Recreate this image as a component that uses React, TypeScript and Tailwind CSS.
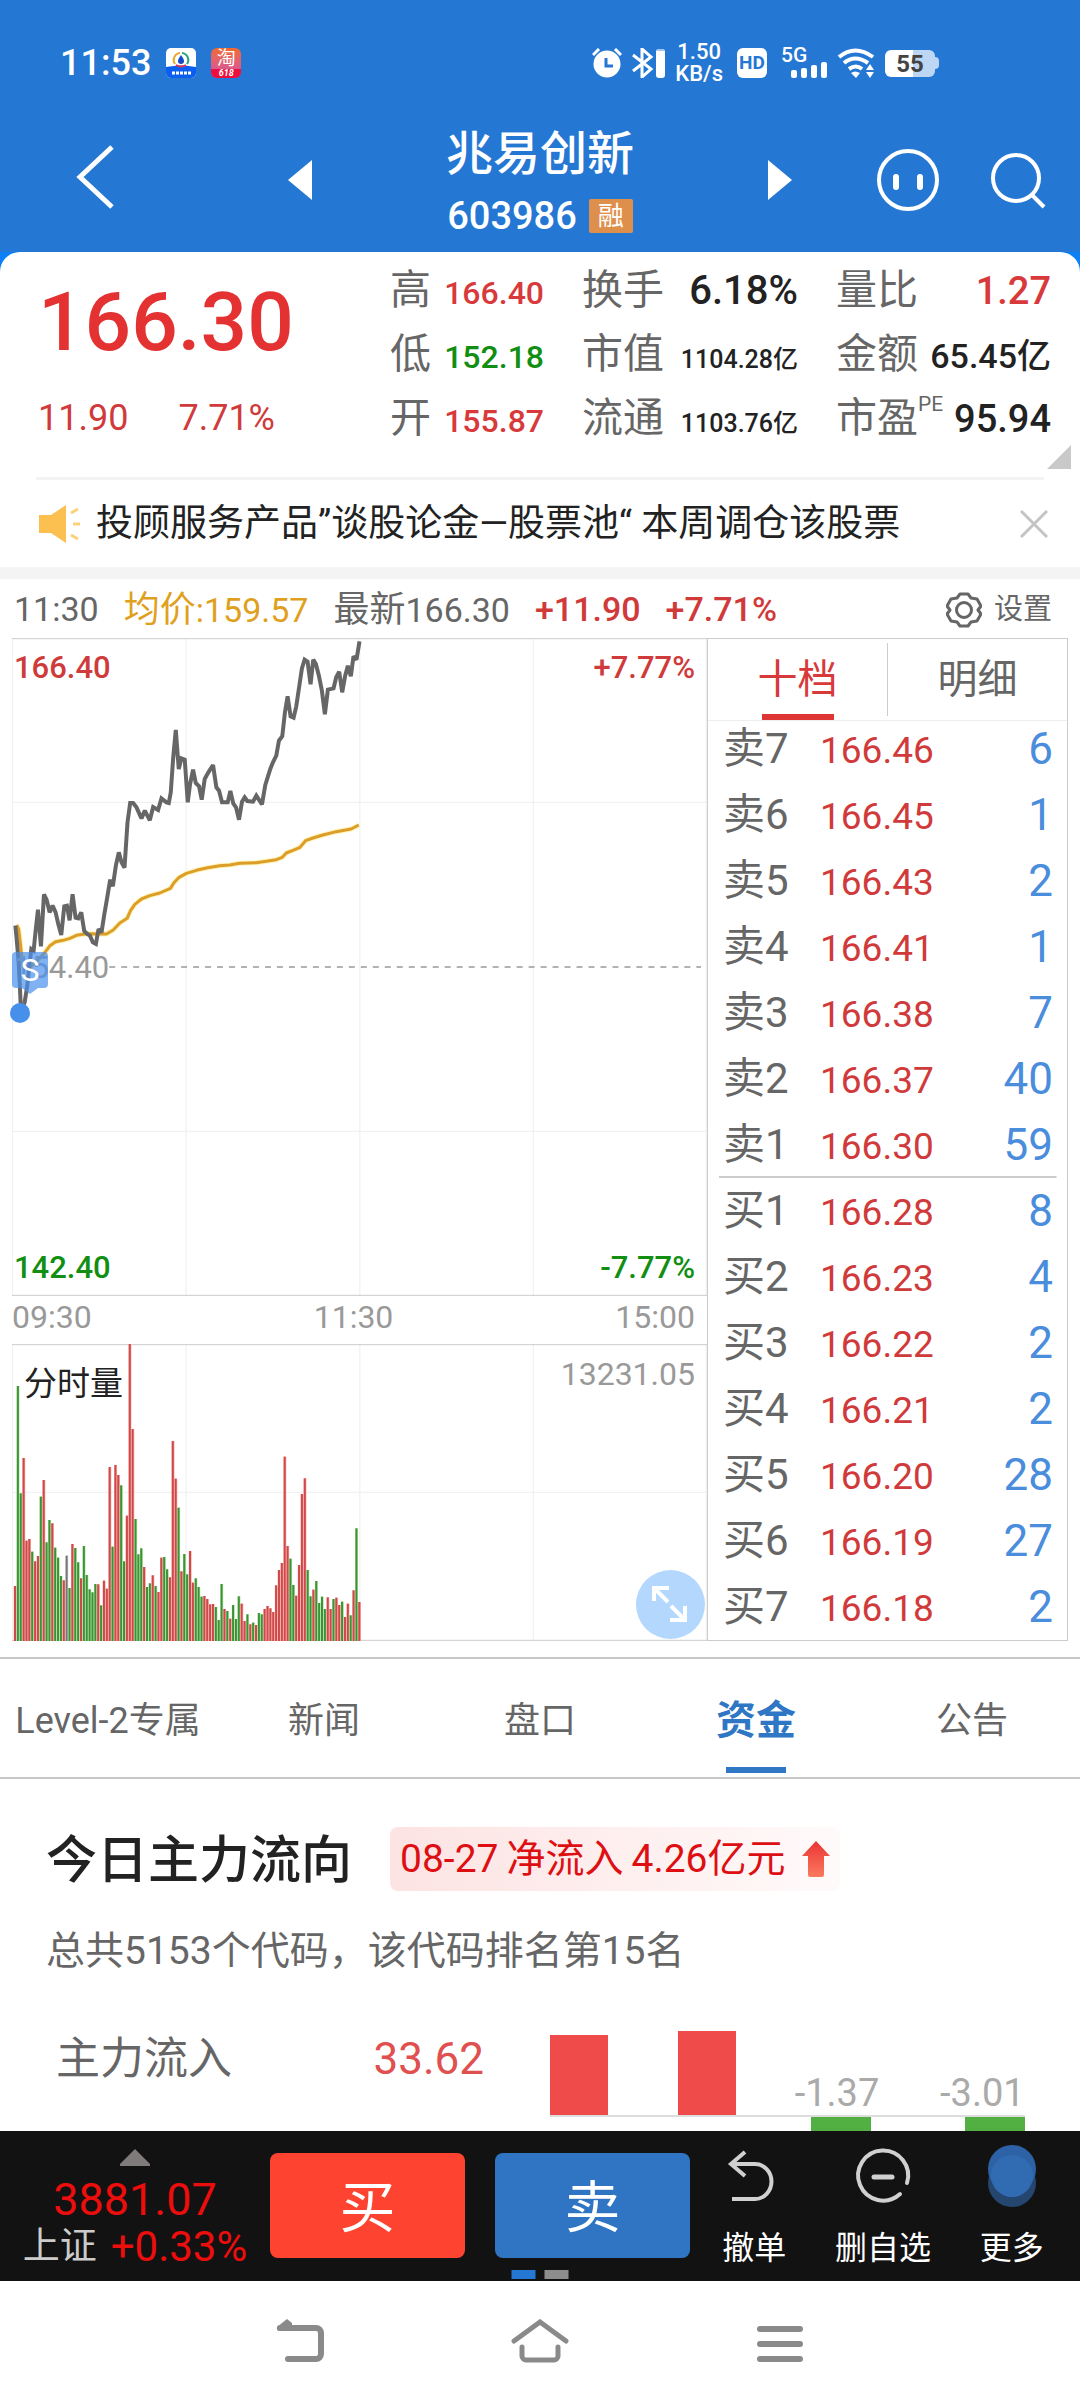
import type { ReactNode } from 'react'
import clsx from 'clsx'

type Tone = 'red' | 'green' | 'dark'

const TONES: Record<Tone, string> = {
  red: 'text-[#d8393a]',
  green: 'text-[#128f12]',
  dark: 'text-[#222222]',
}

const STATS: { label: string; value: string; tone: Tone; size: string; sup?: string }[][] = [
  [
    { label: '高', value: '166.40', tone: 'red', size: 'text-[32px]' },
    { label: '低', value: '152.18', tone: 'green', size: 'text-[32px]' },
    { label: '开', value: '155.87', tone: 'red', size: 'text-[32px]' },
  ],
  [
    { label: '换手', value: '6.18%', tone: 'dark', size: 'text-[40px]' },
    { label: '市值', value: '1104.28亿', tone: 'dark', size: 'text-[25px]' },
    { label: '流通', value: '1103.76亿', tone: 'dark', size: 'text-[25px]' },
  ],
  [
    { label: '量比', value: '1.27', tone: 'red', size: 'text-[38px]' },
    { label: '金额', value: '65.45亿', tone: 'dark', size: 'text-[34px]' },
    { label: '市盈', value: '95.94', tone: 'dark', size: 'text-[38px]', sup: 'PE' },
  ],
]

const STAT_WIDTHS = ['w-[154px]', 'w-[216px]', 'w-[215px]']

const BOOK = [
  ['卖7', '166.46', '6'],
  ['卖6', '166.45', '1'],
  ['卖5', '166.43', '2'],
  ['卖4', '166.41', '1'],
  ['卖3', '166.38', '7'],
  ['卖2', '166.37', '40'],
  ['卖1', '166.30', '59'],
  ['买1', '166.28', '8'],
  ['买2', '166.23', '4'],
  ['买3', '166.22', '2'],
  ['买4', '166.21', '2'],
  ['买5', '166.20', '28'],
  ['买6', '166.19', '27'],
  ['买7', '166.18', '2'],
]

const TABS = ['Level-2专属', '新闻', '盘口', '资金', '公告']

const PRICE_LINE =
  '46,890 50,930 56,1000 60,1080 63,1150 74,1120 82,1070 88,1010 94,960 101,965 107,905 114,842 123,952 132,796 140,812 149,850 158,830 167,850 175,885 184,918 193,832 201,830 209,874 218,796 227,866 235,868 244,850 253,906 262,915 270,920 279,940 288,945 296,900 305,910 313,858 322,806 331,752 339,772 348,710 357,670 365,700 374,716 383,580 391,522 400,522 410,535 425,568 435,545 450,574 460,534 475,543 485,508 500,520 507,522 513,490 520,390 528,303 537,420 545,388 555,392 564,520 571,465 580,422 588,462 598,472 606,512 615,450 626,430 640,408 650,475 658,485 667,520 684,520 692,486 701,524 709,535 718,572 727,518 735,505 743,516 760,518 770,500 787,526 797,468 812,420 820,400 830,380 838,335 848,322 856,250 864,202 873,262 882,266 890,232 900,165 907,118 915,92 924,98 933,166 941,92 949,105 958,140 967,185 976,256 985,182 1002,178 1010,145 1019,128 1028,190 1037,140 1045,110 1054,142 1062,82 1071,92 1080,37'

const AVERAGE_LINE =
  '50,888 56,900 62,950 68,1010 90,1015 110,998 122,985 135,970 150,950 167,938 190,934 210,928 230,919 260,914 320,915 340,903 360,882 382,868 392,845 405,826 425,810 450,800 480,792 512,778 522,762 538,745 560,733 590,724 620,717 660,710 690,708 720,703 770,701 800,697 830,692 848,685 860,672 880,664 900,656 918,635 940,627 970,618 1010,608 1055,600 1078,588'

// Distance of each bar's top from the upper edge, one bar per minute.
const VOLUME_TOPS = [
  726, 126, 448, 342, 590, 585, 623, 652, 636, 458, 408, 595, 528, 538, 611, 641, 696, 709, 635, 732,
  600, 612, 655, 703, 606, 693, 736, 745, 720, 721, 784, 710, 734, 369, 608, 363, 393, 424, 652, 515,
  0, 255, 525, 631, 613, 669, 729, 718, 694, 726, 744, 641, 639, 676, 700, 291, 404, 491, 682, 630,
  691, 621, 716, 703, 729, 758, 756, 765, 781, 780, 789, 828, 720, 795, 801, 824, 783, 825, 757, 779,
  831, 811, 841, 836, 843, 807, 811, 795, 786, 793, 804, 724, 678, 657, 338, 606, 644, 723, 755, 663,
  450, 403, 678, 757, 737, 711, 777, 758, 795, 760, 795, 765, 761, 783, 773, 819, 779, 814, 739, 553,
  774,
]

const VOLUME_SIDES =
  'rggrrrgrrgrggrgggrngrggrggggg' +
  'rgrrrgrrggrrrgggrggrgrrggrrrgrggrrggg' +
  'rrrrgggrgrgggrrgrgrggrrrrrrrrrggrrrrggrgggg' +
  'rrgrrgrrgrgr'

const BAR_COLORS: Record<string, string> = { r: '#cc4a4a', g: '#3f9137', n: '#777777' }
const HALO_COLORS: Record<string, string> = { r: '#ffb4b0', g: '#b4e8a8', n: '#dddddd' }

function GridLines({ height }: { height: number }) {
  return (
    <g stroke="#eeeeee" strokeWidth="3">
      {[1, 523, 1045, 1566, 2086].map((x) => (
        <line key={x} x1={x} x2={x} y1="0" y2={height} />
      ))}
    </g>
  )
}

function PricePanel() {
  return (
    <div className="relative h-[658px] text-[31px] leading-10 font-medium">
      <svg className="h-full w-full" viewBox="0 0 2088 1974" preserveAspectRatio="none">
        <GridLines height={1974} />
        <g stroke="#eeeeee" strokeWidth="3">
          <line x1="0" x2="2088" y1="493" y2="493" />
          <line x1="0" x2="2088" y1="1480" y2="1480" />
        </g>
        <line x1="292" x2="2070" y1="987" y2="987" stroke="#999999" strokeWidth="5" strokeDasharray="18 18" />
        <g transform="translate(-36 -27)" fill="none" strokeLinejoin="round">
          <polyline points={AVERAGE_LINE} stroke="#fff3b8" strokeWidth="15" />
          <polyline points={AVERAGE_LINE} stroke="#dc9e28" strokeWidth="9" />
          <polyline points={PRICE_LINE} stroke="#666666" strokeWidth="12" strokeLinejoin="miter" strokeMiterlimit="2" />
        </g>
        <g stroke="#cccccc" strokeWidth="3">
          <line x1="0" x2="2088" y1="2" y2="2" />
          <line x1="0" x2="2088" y1="1972" y2="1972" />
        </g>
      </svg>
      <span className="absolute top-2.5 left-0.5 text-[#cf3b3b]">166.40</span>
      <span className="absolute top-2.5 right-3 text-[#cf3b3b]">+7.77%</span>
      <span className="absolute top-[310px] left-0.5 font-normal text-[#999999]">154.40</span>
      <span className="absolute bottom-2 left-0.5 text-[#128f12]">142.40</span>
      <span className="absolute right-3 bottom-2 text-[#128f12]">-7.77%</span>
      {/* sell marker */}
      <div className="absolute top-[314px] left-0 flex h-9 w-9 items-center justify-center rounded bg-[#4a90ec]/70 text-[32px] font-normal text-white">
        S
        <svg className="absolute top-9 left-2.5 h-1.5 w-4" viewBox="0 0 16 6">
          <path d="M0 0h16L8 6z" fill="#4a90ec" fillOpacity="0.7" />
        </svg>
      </div>
      <div className="absolute top-[365px] -left-0.5 h-5 w-5 rounded-full bg-[#4690ec]" />
    </div>
  )
}

function VolumePanel() {
  return (
    <div className="relative h-[297px]">
      <svg className="h-full w-full" viewBox="0 0 2088 891" preserveAspectRatio="none">
        <GridLines height={891} />
        <line x1="0" x2="2088" y1="445" y2="445" stroke="#eeeeee" strokeWidth="3" />
        <line x1="0" x2="2088" y1="2" y2="2" stroke="#cccccc" strokeWidth="3" />
        <line x1="0" x2="2088" y1="889" y2="889" stroke="#cccccc" strokeWidth="3" />
        {VOLUME_TOPS.map((top, i) => {
          const x = 9 + i * 8.62
          const side = VOLUME_SIDES[i]
          return (
            <g key={i}>
              <rect x={x - 4} y={top} width="9" height={891 - top} fill={HALO_COLORS[side]} />
              <rect x={x - 3} y={top} width="6" height={891 - top} fill={BAR_COLORS[side]} />
            </g>
          )
        })}
      </svg>
      <span className="absolute top-5 left-3 text-[33px] leading-10 text-[#222222]">分时量</span>
      <span className="absolute top-2.5 right-3 text-[32px] leading-10 text-[#999999]">13231.05</span>
      <button aria-label="全屏" className="absolute right-0.5 bottom-0.5 h-[69px] w-[69px] rounded-full bg-[#b3d7fd]">
        <svg viewBox="0 0 69 69" fill="none" stroke="#ffffff" strokeWidth="4">
          <path d="M33 18H18v13M18 18l14 14M34 50h15V36M49 50L35 36" />
        </svg>
      </button>
    </div>
  )
}

function OrderBook() {
  return (
    <aside className="w-[361px] border border-[#cccccc]">
      <div className="flex h-[82px] border-b border-[#eeeeee] text-[40px] leading-[81px]">
        <button className="relative flex-1 text-[#d8393a]">
          十档
          <span className="absolute bottom-0 left-1/2 h-1.5 w-[72px] -translate-x-1/2 bg-[#de3535]" />
        </button>
        <div className="my-1 w-px bg-[#cccccc]" />
        <button className="flex-1 text-[#666666]">明细</button>
      </div>
      <table className="-mt-[7px] mb-0.5 w-full table-fixed border-collapse">
        <tbody>
          {BOOK.map(([label, price, amount], i) => (
            <tr
              key={label}
              className={clsx('h-[66px]', i === 7 && 'bg-[linear-gradient(#cccccc,#cccccc)] bg-[length:338px_2px] bg-top bg-no-repeat')}
            >
              <th className="w-28 pt-1 pl-[15px] text-left text-[42px] leading-[62px] font-normal text-[#666666]">{label}</th>
              <td className="w-32 pt-2 text-[37px] leading-[58px] text-[#d03a3a]">{price}</td>
              <td className="pt-1 pr-3.5 text-right text-[44px] leading-[62px] text-[#4a8ddc]">{amount}</td>
            </tr>
          ))}
        </tbody>
      </table>
    </aside>
  )
}

function StatusBar() {
  return (
    <div className="flex h-[126px] items-center justify-between pr-[141px] pl-[60px]">
      <div className="flex items-center gap-[15px]">
        <span className="text-[36px] font-medium">11:53</span>
        <svg className="h-[30px] w-[30px]" viewBox="0 0 30 30">
          <rect width="30" height="30" rx="5" fill="#ffffff" />
          <path d="M0 19q15-3 30 0v6a5 5 0 0 1-5 5H5a5 5 0 0 1-5-5z" fill="#0b5ff0" />
          <path d="M14 5a7 7 0 0 0-5 11" fill="none" stroke="#e8a92a" strokeWidth="2" />
          <path d="M16 5a7 7 0 0 1 5 11" fill="none" stroke="#26a77c" strokeWidth="2" />
          <path d="M10 17q5 3 10 0" fill="none" stroke="#dd3355" strokeWidth="2" />
          <path d="M15 7q3 4 3 6a3 3 0 0 1-6 0q0-2 3-6" fill="#1549c8" />
          <path d="M6 25h19" stroke="#ffffff" strokeWidth="3" strokeDasharray="3 1" />
        </svg>
        <div className="flex h-[30px] w-[30px] flex-col overflow-hidden rounded-md bg-linear-to-b from-[#f0692a] to-[#d14fa8] text-center">
          <span className="text-[19px] leading-[21px]">淘</span>
          <span className="bg-[#ef0f3c] text-[9px] leading-[9px] font-bold italic">618</span>
        </div>
      </div>
      <div className="flex items-center gap-2.5">
        <svg className="h-[30px] w-[30px]" viewBox="0 0 30 30">
          <circle cx="15" cy="16" r="13.5" fill="#ffffff" />
          <path d="M1 7l6-6M29 7l-6-6" stroke="#ffffff" strokeWidth="3" />
          <path d="M14 10v8h7" fill="none" stroke="#2577d4" strokeWidth="3" />
        </svg>
        <svg className="h-[30px] w-[33px]" viewBox="0 0 33 30">
          <path d="M1 7l18 14-9 8V1l9 8L1 23" fill="none" stroke="#ffffff" strokeWidth="3" />
          <rect x="24" y="1" width="9" height="29" rx="3" fill="#ffffff" />
          <path d="M24 3a3 3 0 0 1 3-2h3a3 3 0 0 1 3 2z" fill="#9fc3ee" />
        </svg>
        <div className="text-center text-[22px] leading-[22px] font-medium">
          <p>1.50</p>
          <p>KB/s</p>
        </div>
        <div className="mx-1 h-[30px] w-[30px] rounded-md bg-white text-center text-[19px] leading-[30px] font-bold text-[#2577d4]">HD</div>
        <div className="relative h-[34px] w-[46px] text-[21px] leading-[18px] font-medium">
          5G
          <svg className="absolute right-0 bottom-0.5 h-4 w-9" viewBox="0 0 36 16" fill="#ffffff">
            <rect x="0" y="8" width="6" height="8" rx="2" />
            <rect x="10" y="6" width="6" height="10" rx="2" />
            <rect x="20" y="3" width="6" height="13" rx="2" />
            <rect x="30" y="0" width="6" height="16" rx="2" />
          </svg>
        </div>
        <svg className="h-[30px] w-[38px]" viewBox="0 0 38 30" fill="none" stroke="#ffffff" strokeWidth="4">
          <path d="M2 9q16-13 34 0M7 15q11-9 24 0M12 21q7-5 13 0" />
          <path d="M14 25q4-3 9 0l-4 5z" fill="#ffffff" stroke="none" />
          <path d="M29 22l4-6 4 6zM29 24l4 6 4-6z" fill="#ffffff" stroke="none" />
        </svg>
        <div className="flex items-center">
          <div className="h-[27px] w-[50px] rounded-md bg-[linear-gradient(90deg,#ffffff_55%,#bdd6f3_55%)] text-center text-[24px] leading-7 font-bold text-[#444444]">
            55
          </div>
          <div className="h-3 w-1 rounded-r bg-[#bdd6f3]" />
        </div>
      </div>
    </div>
  )
}

function Header() {
  return (
    <header className="bg-[#2577d4] pb-3 text-white">
      <StatusBar />
      <div className="grid grid-cols-[1fr_504px_1fr] items-center">
        <button aria-label="返回" className="pb-3 pl-[75px]">
          <svg className="h-16 w-10" viewBox="0 0 40 64" fill="none" stroke="#ffffff" strokeWidth="5">
            <path d="M37 2L5 32l32 30" />
          </svg>
        </button>
        <div className="flex items-center justify-between">
          <button aria-label="上一只" className="pb-1.5">
            <svg className="h-10 w-6" viewBox="0 0 24 40">
              <path d="M24 0v40L0 20z" fill="#ffffff" />
            </svg>
          </button>
          <div className="text-center">
            <h1 className="text-[47px] leading-[56px] font-medium">兆易创新</h1>
            <p className="mt-2.5 flex h-12 items-center justify-center gap-3 text-[38px] font-medium">
              603986
              <span className="flex h-[34px] w-11 items-center justify-center rounded-xs bg-[#df8f4c] text-[26px] font-normal">
                融
              </span>
            </p>
          </div>
          <button aria-label="下一只" className="pb-1.5">
            <svg className="h-10 w-6" viewBox="0 0 24 40">
              <path d="M0 0v40l24-20z" fill="#ffffff" />
            </svg>
          </button>
        </div>
        <div className="flex items-center justify-end gap-[51px] pr-[33px] pb-1">
          <button aria-label="客服">
            <svg className="h-16 w-16" viewBox="0 0 64 64" fill="none" stroke="#ffffff">
              <circle cx="32" cy="31" r="29" strokeWidth="4" />
              <path d="M20 28v10M44 28v10" strokeWidth="6" strokeLinecap="round" />
            </svg>
          </button>
          <button aria-label="搜索">
            <svg className="h-16 w-14" viewBox="0 0 56 64" fill="none" stroke="#ffffff" strokeWidth="4">
              <circle cx="25" cy="29" r="23" />
              <path d="M41 46l12 12" />
            </svg>
          </button>
        </div>
      </div>
    </header>
  )
}

function Quote() {
  return (
    <section className="relative flex gap-[38px] pt-1.5 pr-[29px] pb-[27px] pl-[38px]">
      <div className="flex-1">
        <p className="text-[82px] leading-[128px] font-medium text-[#e43232]">166.30</p>
        <p className="flex gap-[50px] text-[36px] leading-[64px] text-[#d03a3a]">
          <span>11.90</span>
          <span>7.71%</span>
        </p>
      </div>
      {STATS.map((column, i) => (
        <dl key={STAT_WIDTHS[i]} className={STAT_WIDTHS[i]}>
          {column.map(({ label, value, tone, size, sup }) => (
            <div key={label} className="flex h-16 items-baseline justify-between whitespace-nowrap">
              <dt className="flex text-[41px] leading-[64px] text-[#666666]">
                {label}
                {sup && <span className="text-[21px] leading-9">{sup}</span>}
              </dt>
              <dd className={clsx('leading-[64px] font-medium', size, TONES[tone])}>{value}</dd>
            </div>
          ))}
        </dl>
      ))}
      <svg className="absolute right-[9px] bottom-2 h-6 w-6" viewBox="0 0 24 24">
        <path d="M24 0v24H0z" fill="#c9c9c9" />
      </svg>
    </section>
  )
}

function Notice() {
  return (
    <section className="mx-9 flex h-[90px] items-center border-t-[3px] border-[#f3f3f3]">
      <svg className="h-10 w-11 shrink-0" viewBox="0 0 44 40">
        <path d="M3 11h12L30 1v38L15 29H3z" fill="#fcc050" />
        <path d="M35 9l7-4M37 20h7M35 31l7 4" stroke="#f9d27a" strokeWidth="3" />
      </svg>
      <p className="ml-4 flex-1 text-[37px] whitespace-nowrap text-[#222222]">投顾服务产品”谈股论金—股票池“ 本周调仓该股票</p>
      <button aria-label="关闭" className="-mr-1">
        <svg className="h-7 w-7" viewBox="0 0 28 28" stroke="#c4c4c4" strokeWidth="3">
          <path d="M1 1l26 26M27 1L1 27" />
        </svg>
      </button>
    </section>
  )
}

function InfoRow() {
  return (
    <div className="flex h-[59px] items-center pt-0.5 pr-7 pl-3.5 text-[34px] whitespace-nowrap text-[#666666]">
      <span>11:30</span>
      <span className="ml-[25px] text-[#dfa01e]">
        <span className="text-[36px]">均价</span>:159.57
      </span>
      <span className="ml-[25px]">
        <span className="text-[36px]">最新</span>166.30
      </span>
      <span className="ml-[25px] font-medium text-[#d03a3a]">+11.90</span>
      <span className="ml-[25px] font-medium text-[#d03a3a]">+7.71%</span>
      <button className="ml-auto flex items-center gap-3 text-[29px]">
        <svg className="h-9 w-9" viewBox="0 0 36 36" fill="none" stroke="#666666" strokeWidth="3" strokeLinejoin="round">
          <path d="M14 2h8l3 4 6 1 4 7-3 4 3 4-4 7-6 1-3 4h-8l-3-4-6-1-4-7 3-4-3-4 4-7 6-1z" />
          <circle cx="18" cy="18" r="7.5" />
        </svg>
        设置
      </button>
    </div>
  )
}

function Flow() {
  return (
    <section className="h-[352px] overflow-hidden">
      <div className="mt-12 flex h-16 items-center gap-[38px] pl-[46px]">
        <h2 className="pt-1 text-[51px] font-medium text-[#222222]">今日主力流向</h2>
        <div className="flex h-16 items-center gap-2 rounded-lg bg-linear-to-r from-[#fde3e3] to-[#fffafa] pr-2.5 pl-2.5 text-[39px] whitespace-nowrap text-[#dd0f12]">
          <span>08-27</span>
          <span>净流入</span>
          <span>4.26亿元</span>
          <svg className="ml-2 h-9 w-7" viewBox="0 0 28 36">
            <defs>
              <linearGradient id="rise" x1="0" y1="0" x2="0" y2="1">
                <stop offset="0" stopColor="#e93434" />
                <stop offset="1" stopColor="#fb7a5e" />
              </linearGradient>
            </defs>
            <path d="M14 0l14 15h-6v19a2 2 0 0 1-2 2H8a2 2 0 0 1-2-2V15H0z" fill="url(#rise)" />
          </svg>
        </div>
      </div>
      <p className="mt-[30px] pl-[46px] text-[39px] leading-[60px] text-[#666666]">总共5153个代码，该代码排名第15名</p>
      <div className="mt-11 flex pr-[55px] pl-14">
        <div className="flex flex-1 justify-between pt-1 pr-[66px] text-[44px] leading-[60px] text-[#666666]">
          <span>主力流入</span>
          <span className="text-[#e05050]">33.62</span>
        </div>
        <div className="w-[475px]">
          <div className="flex h-[92px] items-end border-b-2 border-[#dddddd]">
            <div className="h-20 w-[60px] bg-[#f04b4b]" />
            <div className="ml-[70px] h-[84px] w-[60px] bg-[#f04b4b]" />
            <span className="ml-[58px] w-[88px] text-center text-[38px] leading-[44px] whitespace-nowrap text-[#aaaaaa]">-1.37</span>
            <span className="ml-[60px] w-[88px] text-center text-[38px] leading-[44px] whitespace-nowrap text-[#aaaaaa]">-3.01</span>
          </div>
          <div className="flex justify-end gap-[94px]">
            <div className="h-6 w-[60px] bg-[#52b043]" />
            <div className="h-6 w-[60px] bg-[#52b043]" />
          </div>
        </div>
      </div>
    </section>
  )
}

function ToolButton({ label, children }: { label: string; children: ReactNode }) {
  return (
    <button className="flex flex-1 flex-col items-center gap-5 pt-3 text-[32px] leading-[42px] whitespace-nowrap text-white">
      <svg className="h-16 w-16" viewBox="0 0 64 64" fill="none" stroke="#d0d0d0" strokeWidth="4">
        {children}
      </svg>
      {label}
    </button>
  )
}

function TradeBar() {
  return (
    <div className="relative flex h-[150px] bg-[#121212]">
      <button className="flex w-[270px] flex-col items-center pt-[18px] whitespace-nowrap">
        <svg className="h-[17px] w-[30px]" viewBox="0 0 30 17">
          <path d="M15 0l15 15v2H0v-2z" fill="#7f7b7b" />
        </svg>
        <span className="mt-2.5 text-[45px] leading-[48px] text-[#ec0d0d]">3881.07</span>
        <span className="flex items-center gap-3.5 text-[42px] leading-[46px] text-[#ec0d0d]">
          <span className="text-[37px] text-[#cccccc]">上证</span>
          +0.33%
        </span>
      </button>
      <div className="flex w-[420px] gap-[30px] pt-[22px] text-[56px] leading-[110px] text-white">
        <button className="h-[105px] flex-1 rounded-lg bg-[#fe4430]">买</button>
        <button className="h-[105px] flex-1 rounded-lg bg-[#3075c3]">卖</button>
      </div>
      <div className="flex flex-1 pr-1">
        <ToolButton label="撤单">
          <path d="M23 9L9 21l14 12M9 21h24a16 17 0 0 1 0 35H10" />
        </ToolButton>
        <ToolButton label="删自选">
          <path d="M49 51a25 25 0 1 1 7-11" strokeLinecap="round" />
          <path d="M23 34h18" strokeWidth="5" strokeLinecap="round" />
        </ToolButton>
        <ToolButton label="更多">
          <circle cx="32" cy="40" r="24" fill="#24466f" stroke="none" />
          <circle cx="32" cy="26" r="24" fill="#2d62a6" stroke="none" />
          <circle cx="32" cy="33" r="21" fill="#316cb2" stroke="none" />
        </ToolButton>
      </div>
      <div className="absolute bottom-0.5 left-1/2 flex -translate-x-1/2 gap-[9px]">
        <span className="h-[9px] w-6 bg-[#2577d4]" />
        <span className="h-[9px] w-6 bg-[#8d8d8d]" />
      </div>
    </div>
  )
}

function SystemNav() {
  return (
    <nav className="flex h-[126px] items-center justify-center gap-[180px] bg-white pb-1.5">
      <button aria-label="系统返回">
        <svg className="h-11 w-[60px]" viewBox="0 0 60 44" fill="none" stroke="#8a8a8a" strokeWidth="6">
          <path d="M18 40h28a5 5 0 0 0 5-5V14a5 5 0 0 0-5-5H10" strokeLinecap="round" />
          <path d="M7 8l10-8 5 4v8H9a3 3 0 0 1-2-4z" fill="#8a8a8a" stroke="none" />
        </svg>
      </button>
      <button aria-label="主页">
        <svg className="h-11 w-[60px]" viewBox="0 0 60 44" fill="none" stroke="#8a8a8a" strokeWidth="5" strokeLinecap="round">
          <path d="M4 22L30 3l26 19M12 28v9a4 4 0 0 0 4 4h28a4 4 0 0 0 4-4v-9" />
        </svg>
      </button>
      <button aria-label="最近任务">
        <svg className="h-11 w-[60px]" viewBox="0 0 60 44" stroke="#8a8a8a" strokeWidth="6" strokeLinecap="round">
          <path d="M10 10h40M10 25h40M10 40h40" />
        </svg>
      </button>
    </nav>
  )
}

export default function App() {
  return (
    <div className="bg-white font-['Roboto','Noto_Sans_CJK_SC',sans-serif]">
      <Header />
      <div className="bg-[#0b80f7]">
        <div className="rounded-t-[20px] bg-white">
          <Quote />
          <Notice />
        </div>
      </div>
      <div className="h-3 bg-[#f4f4f4]" />
      <InfoRow />

      <main>
        <div className="flex items-start pr-3 pb-4 pl-3">
          <div className="min-w-0 flex-1">
            <PricePanel />
            <div className="flex h-12 justify-between pr-3 text-[32px] leading-[42px] text-[#999999]">
              <span>09:30</span>
              <span>11:30</span>
              <span>15:00</span>
            </div>
            <VolumePanel />
          </div>
          <OrderBook />
        </div>

        <nav className="flex h-[122px] border-y-2 border-[#c8c8c8]">
          {TABS.map((tab) => {
            const active = tab === '资金'
            return (
              <a
                key={tab}
                href="#"
                className={clsx(
                  'relative flex flex-1 items-center justify-center pt-1.5 whitespace-nowrap',
                  active ? 'text-[40px] font-bold text-[#2f77c4]' : 'text-[36px] text-[#666666]',
                )}
              >
                {tab}
                {active && <span className="absolute bottom-1 h-1.5 w-[60px] bg-[#2f77c4]" />}
              </a>
            )
          })}
        </nav>
        <Flow />
      </main>

      <TradeBar />
      <SystemNav />
    </div>
  )
}
